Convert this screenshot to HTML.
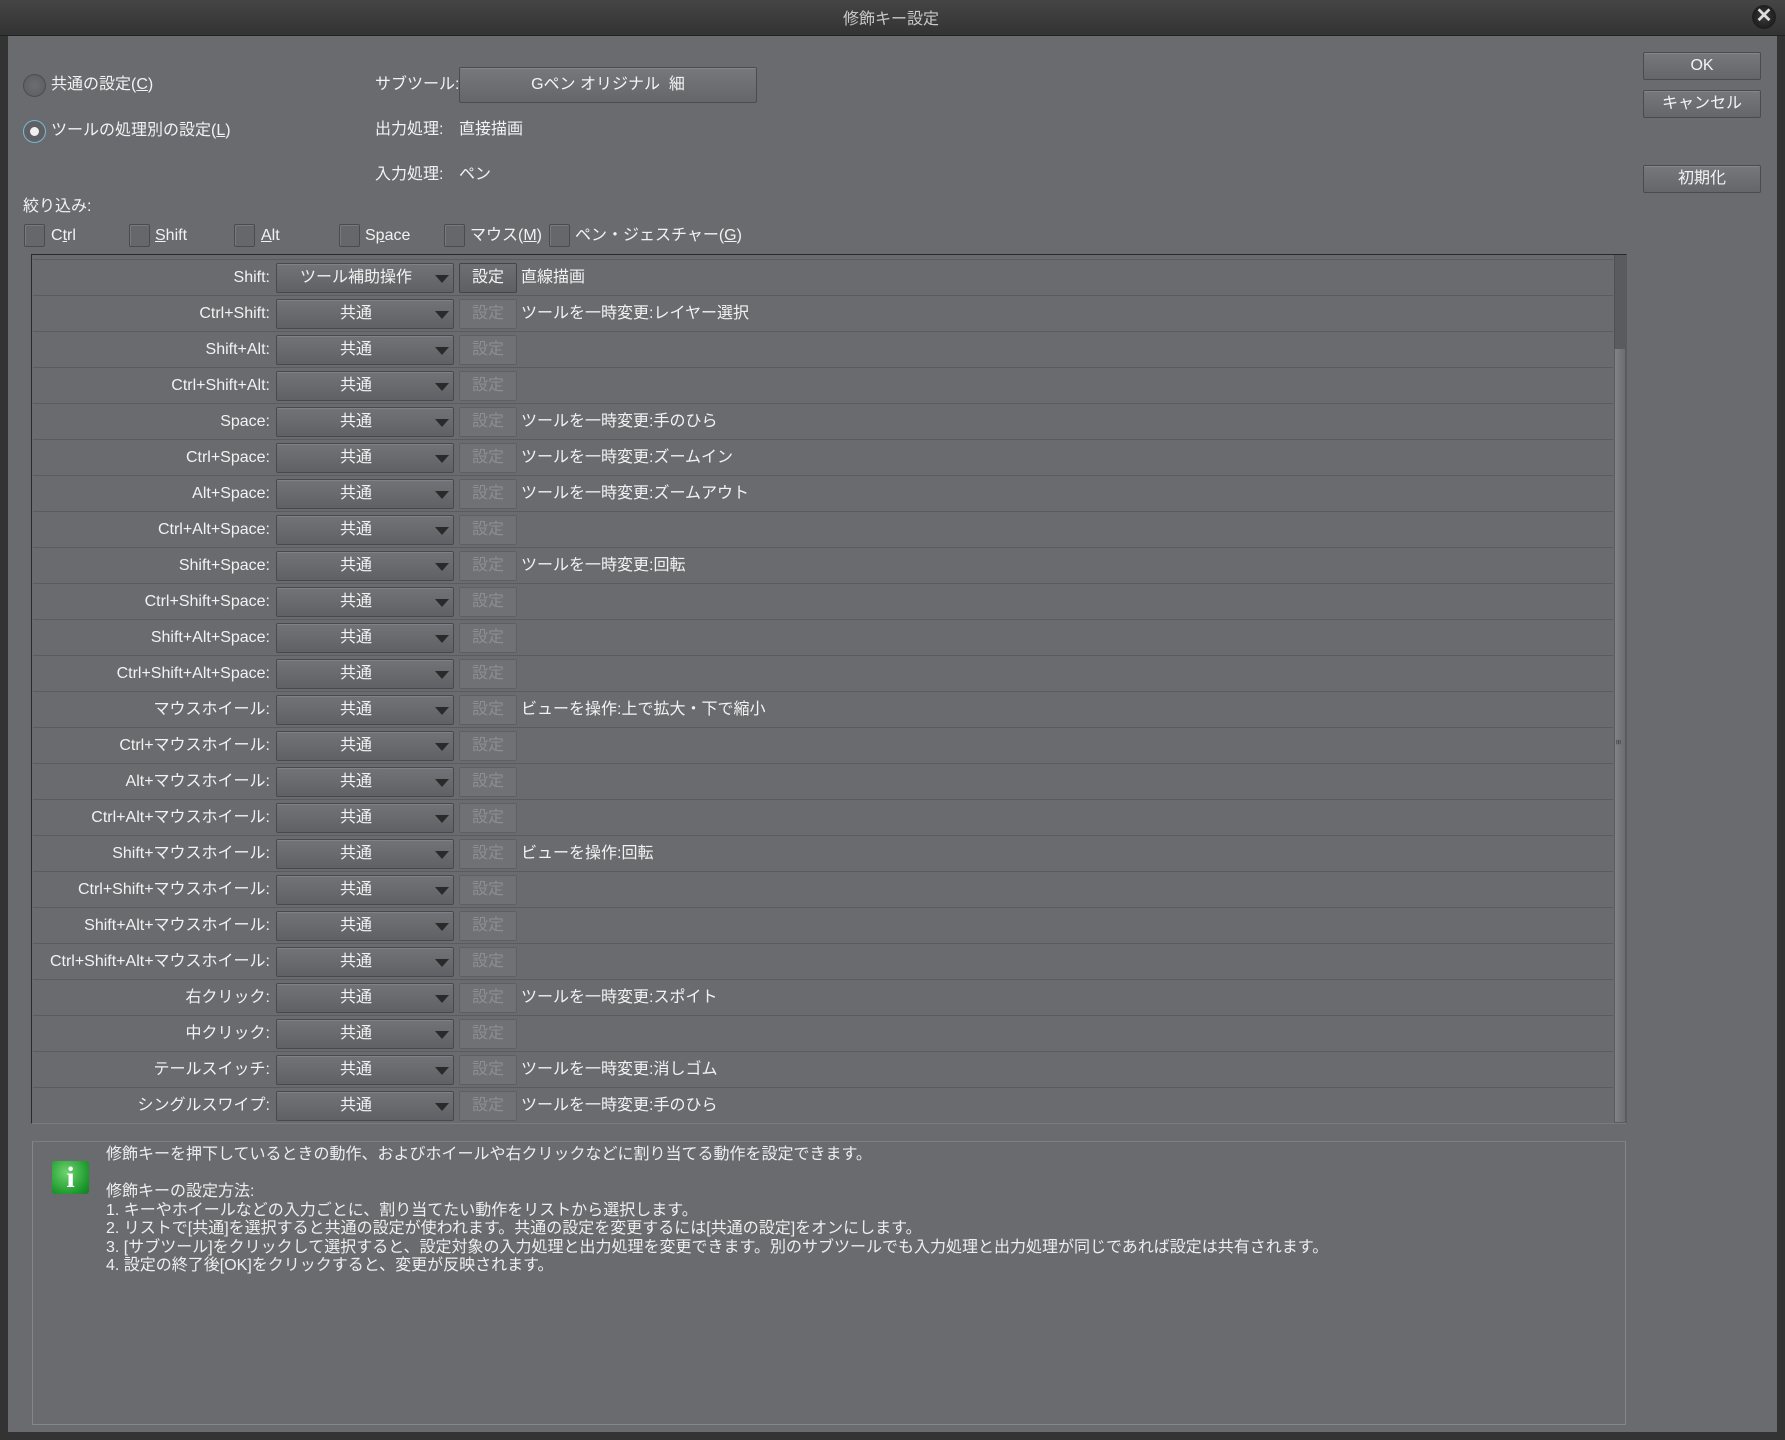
<!DOCTYPE html>
<html><head><meta charset="utf-8"><style>
*{margin:0;padding:0;box-sizing:border-box}
body{width:1785px;height:1440px;background:#333;position:relative;overflow:hidden;font-family:"Liberation Sans","Noto Sans CJK JP",sans-serif;color:#f2f2f2;font-size:16px;line-height:20px}
.a{position:absolute;white-space:nowrap;line-height:20px}
#title{left:0;top:0;width:1785px;height:36px;background:linear-gradient(#454545,#333);border-bottom:1px solid #222}
#body{left:8px;top:36px;width:1769px;height:1396px;background:#6a6b6f}
.btn{position:absolute;background:linear-gradient(#77787c,#65666a);border:1px solid #4a4b4e;border-radius:2px;box-shadow:inset 0 1px 0 #85868a;text-align:center;color:#f4f4f4}
.radio{position:absolute;width:23px;height:23px;border-radius:50%;background:radial-gradient(#6d6e72,#5a5b5f);border:1px solid #4c4d50}
.cb{position:absolute;width:21px;height:23px;background:#66676b;border:1px solid #4a4b4e;border-radius:2px;box-shadow:inset 1px 1px 0 #78797d}
.lbl{position:absolute;right:1515px;text-align:right}
.dd{position:absolute;left:276px;width:178px;height:30px;background:linear-gradient(#727377,#606165);border:1px solid #48494c;border-radius:2px;box-shadow:inset 0 1px 0 #808185;text-align:center;line-height:28px;padding-right:18px}
.dd:after{content:"";position:absolute;right:4px;top:11px;border-left:7px solid transparent;border-right:7px solid transparent;border-top:8px solid #2a2a2a}
.set{position:absolute;left:459px;width:58px;height:30px;border:1px solid #5e5f63;border-radius:2px;background:#707175;color:#8d8e92;text-align:center;line-height:28px}
.set.on{background:linear-gradient(#6e6f73,#5e5f63);border-color:#434447;color:#f4f4f4}
.sep{position:absolute;left:33px;width:1580px;height:1px;background:#5a5b5f}
</style></head><body>
<div class="a" id="title"></div>
<div class="a" style="left:843px;top:10px;font-size:16px;color:#c8c8c8">修飾キー設定</div>
<div class="a" style="left:1752px;top:5px;width:24px;height:24px;border-radius:50%;background:radial-gradient(#3a3a3a,#111);text-align:center;line-height:23px;font-size:20px;font-weight:bold;color:#ddd">✕</div>
<div class="a" id="body"></div>

<div class="radio" style="left:23px;top:74px"></div>
<div class="a" style="left:51px;top:75px">共通の設定(<u>C</u>)</div>
<div class="radio" style="left:23px;top:120px;border-color:#7ab8d8;background:#5f6064"><div style="position:absolute;left:6px;top:6px;width:9px;height:9px;border-radius:50%;background:#f0f0f0"></div></div>
<div class="a" style="left:51px;top:121px">ツールの処理別の設定(<u>L</u>)</div>

<div class="a" style="left:375px;top:75px">サブツール:</div>
<div class="btn" style="left:459px;top:67px;width:298px;height:36px;line-height:34px">Gペン オリジナル&nbsp; 細</div>
<div class="a" style="left:375px;top:120px">出力処理:</div>
<div class="a" style="left:459px;top:120px">直接描画</div>
<div class="a" style="left:375px;top:165px">入力処理:</div>
<div class="a" style="left:459px;top:165px">ペン</div>
<div class="a" style="left:23px;top:197px">絞り込み:</div>

<div class="cb" style="left:24px;top:224px"></div><div class="a" style="left:51px;top:226px">C<u>t</u>rl</div>
<div class="cb" style="left:129px;top:224px"></div><div class="a" style="left:155px;top:226px"><u>S</u>hift</div>
<div class="cb" style="left:234px;top:224px"></div><div class="a" style="left:261px;top:226px"><u>A</u>lt</div>
<div class="cb" style="left:339px;top:224px"></div><div class="a" style="left:365px;top:226px">S<u>p</u>ace</div>
<div class="cb" style="left:444px;top:224px"></div><div class="a" style="left:470px;top:226px">マウス(<u>M</u>)</div>
<div class="cb" style="left:549px;top:224px"></div><div class="a" style="left:575px;top:226px">ペン・ジェスチャー(<u>G</u>)</div>

<div class="btn" style="left:1643px;top:52px;width:118px;height:28px;line-height:26px">OK</div>
<div class="btn" style="left:1643px;top:90px;width:118px;height:28px;line-height:26px">キャンセル</div>
<div class="btn" style="left:1643px;top:165px;width:118px;height:28px;line-height:26px">初期化</div>

<div class="a" style="left:31px;top:254px;width:1596px;height:870px;border:1px solid #2a2a2c;border-right-color:#5a5b5e;border-bottom-color:#7a7b7f;background:#6a6b6f"></div>
<div class="a" style="left:1614px;top:255px;width:12px;height:93px;background:#5a5b5e;border-left:1px solid #505154"></div>
<div class="a" style="left:1614px;top:348px;width:12px;height:775px;background:linear-gradient(90deg,#818286,#6c6d71);border:1px solid #5a5b5e"></div>
<div class="a" style="left:1616px;top:732px;font-size:9px;color:#333;transform:rotate(90deg)">≡</div>

<div id="rows"></div>

<div class="a" style="left:32px;top:1141px;width:1594px;height:284px;border:1px solid #85868a;border-top-color:#7d7e82;background:#6a6b6f"></div>
<div class="a" style="left:52px;top:1161px;width:37px;height:33px;border-radius:3px;background:radial-gradient(circle at 40% 35%,#6fd46f,#1e9a2e 70%,#157a22);text-align:center;font-family:'Liberation Serif',serif;font-weight:bold;font-size:30px;line-height:33px;color:#fff">i</div>
<div class="a" style="left:106px;top:1146px;font-size:16px;line-height:18.5px;color:#eee">修飾キーを押下しているときの動作、およびホイールや右クリックなどに割り当てる動作を設定できます。<br><br>修飾キーの設定方法:<br>1. キーやホイールなどの入力ごとに、割り当てたい動作をリストから選択します。<br>2. リストで[共通]を選択すると共通の設定が使われます。共通の設定を変更するには[共通の設定]をオンにします。<br>3. [サブツール]をクリックして選択すると、設定対象の入力処理と出力処理を変更できます。別のサブツールでも入力処理と出力処理が同じであれば設定は共有されます。<br>4. 設定の終了後[OK]をクリックすると、変更が反映されます。</div>

<script>
var rows=[["Shift","ツール補助操作",1,"直線描画"],["Ctrl+Shift","共通",0,"ツールを一時変更:レイヤー選択"],["Shift+Alt","共通",0,""],["Ctrl+Shift+Alt","共通",0,""],["Space","共通",0,"ツールを一時変更:手のひら"],["Ctrl+Space","共通",0,"ツールを一時変更:ズームイン"],["Alt+Space","共通",0,"ツールを一時変更:ズームアウト"],["Ctrl+Alt+Space","共通",0,""],["Shift+Space","共通",0,"ツールを一時変更:回転"],["Ctrl+Shift+Space","共通",0,""],["Shift+Alt+Space","共通",0,""],["Ctrl+Shift+Alt+Space","共通",0,""],["マウスホイール","共通",0,"ビューを操作:上で拡大・下で縮小"],["Ctrl+マウスホイール","共通",0,""],["Alt+マウスホイール","共通",0,""],["Ctrl+Alt+マウスホイール","共通",0,""],["Shift+マウスホイール","共通",0,"ビューを操作:回転"],["Ctrl+Shift+マウスホイール","共通",0,""],["Shift+Alt+マウスホイール","共通",0,""],["Ctrl+Shift+Alt+マウスホイール","共通",0,""],["右クリック","共通",0,"ツールを一時変更:スポイト"],["中クリック","共通",0,""],["テールスイッチ","共通",0,"ツールを一時変更:消しゴム"],["シングルスワイプ","共通",0,"ツールを一時変更:手のひら"]];
var h="";
for(var i=0;i<rows.length;i++){var r=rows[i],c=278+36*i,t=c-15;
h+='<div class="sep" style="top:'+(c-19)+'px"></div>';
h+='<div class="lbl a" style="top:'+(c-10)+'px">'+r[0]+':</div>';
h+='<div class="dd" style="top:'+t+'px">'+r[1]+'</div>';
h+='<div class="set'+(r[2]?' on':'')+'" style="top:'+t+'px">設定</div>';
if(r[3])h+='<div class="a" style="left:521px;top:'+(c-10)+'px">'+r[3]+'</div>';}
document.getElementById("rows").innerHTML=h;
</script>
</body></html>
